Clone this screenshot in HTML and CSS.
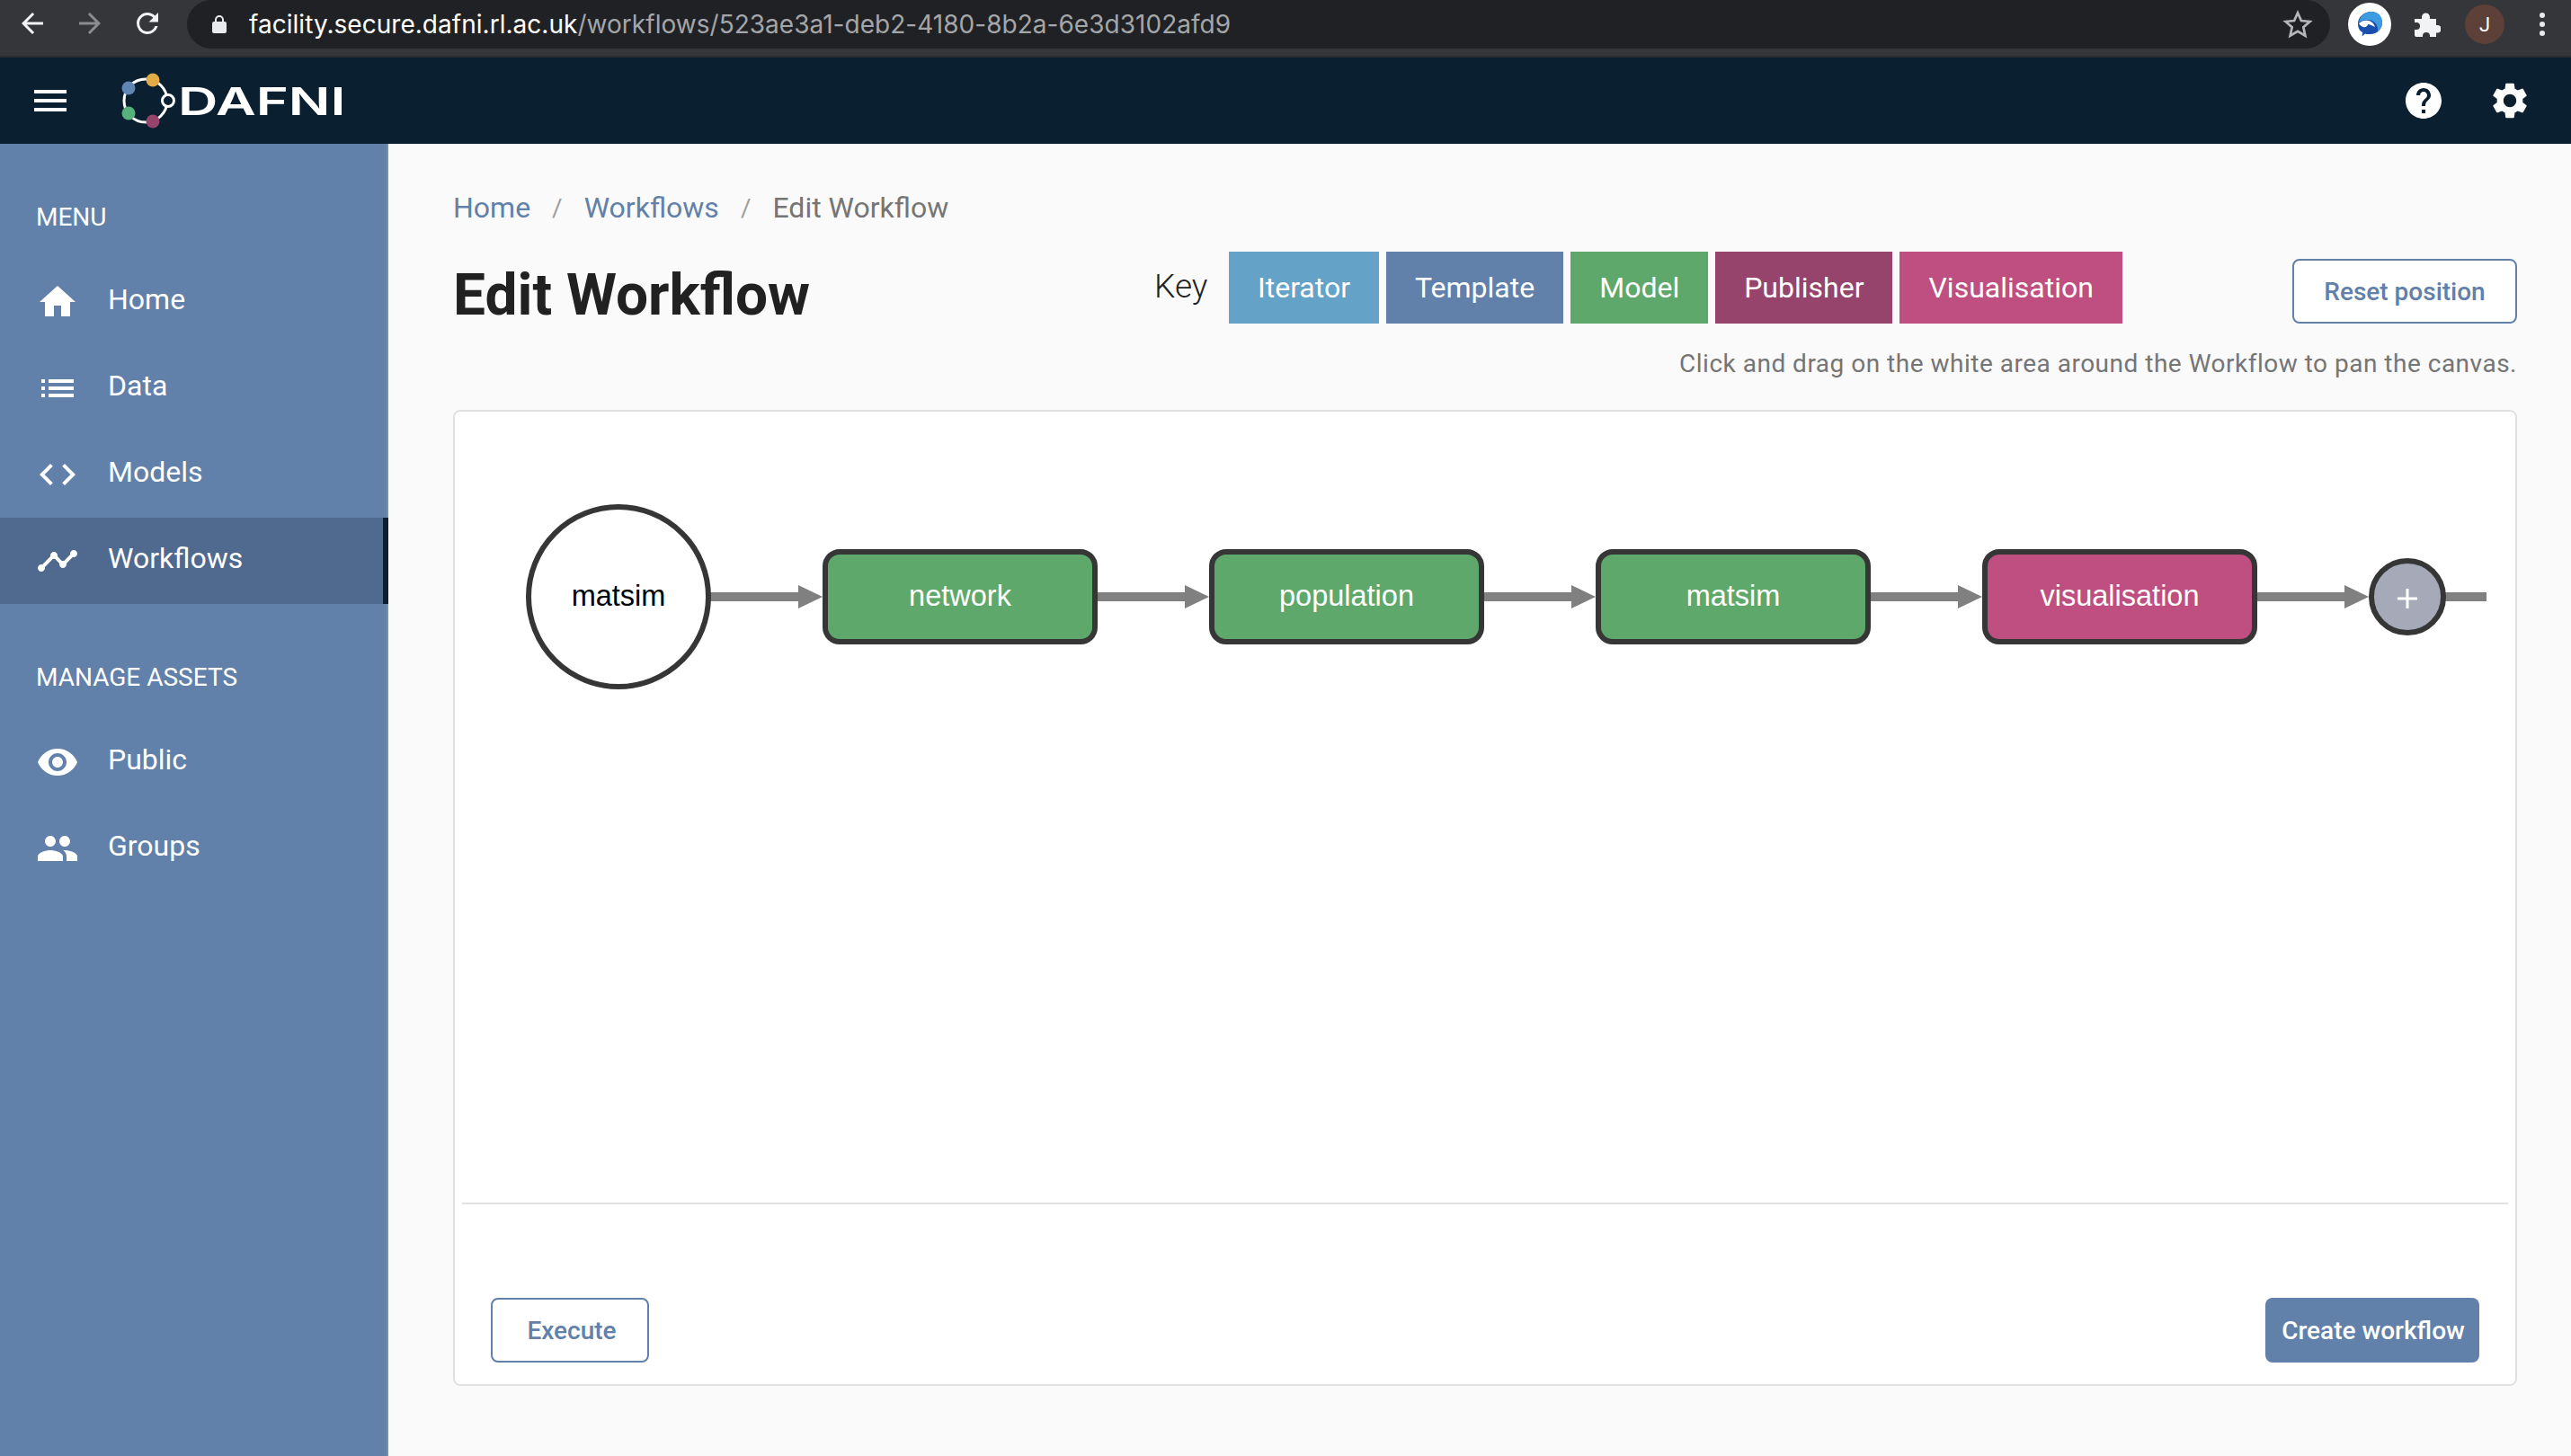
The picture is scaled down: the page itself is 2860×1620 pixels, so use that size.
FILE: index.html
```html
<!DOCTYPE html>
<html lang="en">
<head>
    <meta charset="UTF-8">
    <meta name="viewport" content="width=device-width, initial-scale=1.0">
    <title>Edit Workflow</title>
    <link rel="stylesheet" href="styles.css">
</head>
<body>

    <div class="browser-bar">
        <svg class="chrome-icon back" viewBox="0 0 24 24"><path d="M20 11H7.83l5.59-5.59L12 4l-8 8 8 8 1.41-1.41L7.83 13H20v-2z"/></svg>
        <svg class="chrome-icon forward" viewBox="0 0 24 24"><path d="M4 11h12.17l-5.59-5.59L12 4l8 8-8 8-1.41-1.41L16.17 13H4v-2z"/></svg>
        <svg class="chrome-icon reload" viewBox="0 0 24 24"><path d="M17.65 6.35A7.96 7.96 0 0 0 12 4a8 8 0 1 0 7.73 10h-2.08A6 6 0 1 1 12 6c1.66 0 3.14.69 4.22 1.78L13 11h7V4l-2.35 2.35z"/></svg>
        <div class="address">
            <svg class="lock" viewBox="0 0 16 20"><path d="M8 0a5 5 0 0 0-5 5v2H2a2 2 0 0 0-2 2v9a2 2 0 0 0 2 2h12a2 2 0 0 0 2-2V9a2 2 0 0 0-2-2h-1V5a5 5 0 0 0-5-5zm3 7H5V5a3 3 0 0 1 6 0v2z"/></svg>
            <span class="url"><span class="host">facility.secure.dafni.rl.ac.uk</span>/workflows/523ae3a1-deb2-4180-8b2a-6e3d3102afd9</span>
            <svg class="star" viewBox="0 0 24 24"><path d="M12 3.500l2.600 5.900 6.400.6-4.800 4.200 1.400 6.300-5.600-3.300-5.600 3.300 1.400-6.300L3 10l6.400-.6z"/></svg>
        </div>
        <div class="chrome-right">
            <svg class="ext-logo" viewBox="0 0 48 48">
                <circle cx="24" cy="24" r="24" fill="#fff"/>
                <path d="M26 10c7 0 12 5 12 12 0 8-7 14-15 13-2 0-3 0-4-.5l-3.500 3 .8-4.500C12 31 11 27 11 23c0-7 7-13 15-13z" fill="#1a4fae"/>
                <path d="M26 10c7 0 12 5 12 12 0 4-2 8-5 10 1-7-4-13-11-13-4 0-8 1-10 3 1-7 7-12 14-12z" fill="#3d9be0"/>
                <path d="M12 23c3-3 7-4 11-3 4 1 6 4 7 7-4-2-6-3-8-3 0 2-3 4-5 3-2-.5-4-2-5-4z" fill="#fff"/>
            </svg>
            <svg class="puzzle" viewBox="0 0 29 27"><path d="M0 7h8V5a4.500 4.500 0 0 1 9 0v2h7v7h1.500a4.300 4.300 0 0 1 0 8.600H24V27h-7v-1a4 4 0 0 0-8 0v1H2a2 2 0 0 1-2-2v-6h2a4 4 0 0 0 0-8H0V7z"/></svg>
            <span class="avatar">J</span>
            <span class="dots"><i></i><i></i><i></i></span>
        </div>
    </div>

    <header class="topnav">
        <svg class="icon menu-icon" viewBox="0 0 24 24"><path d="M3 18h18v-2H3v2zm0-5h18v-2H3v2zm0-7v2h18V6H3z"/></svg>
        <svg class="logo-mark" viewBox="0 0 60 60">
            <circle cx="30" cy="30" r="24" fill="none" stroke="#fff" stroke-width="3"/>
            <circle cx="38" cy="7" r="7.500" fill="#e2ab45"/>
            <circle cx="11" cy="16" r="7.500" fill="#5f85b3"/>
            <circle cx="11" cy="44" r="7.500" fill="#55b27a"/>
            <circle cx="38" cy="53" r="7.500" fill="#96446b"/>
            <circle cx="55" cy="30" r="6.500" fill="#0a1f30" stroke="#fff" stroke-width="3"/>
        </svg>
        <span class="logo-text">DAFNI</span>
        <div class="nav-actions">
            <svg class="icon" viewBox="0 0 24 24"><path d="M12 2C6.480 2 2 6.480 2 12s4.480 10 10 10 10-4.480 10-10S17.520 2 12 2zm1 17h-2v-2h2v2zm2.070-7.750l-.9.920C13.450 12.900 13 13.500 13 15h-2v-.5c0-1.100.450-2.100 1.170-2.830l1.240-1.260c.370-.360.590-.860.590-1.410 0-1.100-.9-2-2-2s-2 .9-2 2H8c0-2.210 1.790-4 4-4s4 1.790 4 4c0 .880-.360 1.680-.930 2.250z"/></svg>
            <svg class="icon" viewBox="0 0 24 24"><path d="M19.140 12.940c.040-.3.060-.610.060-.940 0-.320-.020-.640-.070-.940l2.030-1.580c.180-.140.230-.410.120-.610l-1.920-3.320c-.120-.220-.370-.290-.590-.220l-2.390.960c-.5-.380-1.030-.7-1.620-.940l-.360-2.540c-.040-.240-.240-.410-.480-.410h-3.840c-.240 0-.430.170-.470.410l-.360 2.540c-.590.240-1.130.570-1.620.940l-2.390-.960c-.220-.080-.470 0-.590.220L2.740 8.870c-.120.210-.080.470.120.610l2.030 1.580c-.050.3-.090.630-.09.940s.02.64.07.94l-2.030 1.580c-.18.14-.23.41-.12.61l1.920 3.32c.12.22.37.29.59.22l2.39-.96c.5.38 1.03.7 1.62.94l.36 2.54c.05.24.24.41.48.41h3.84c.24 0 .44-.17.47-.41l.36-2.54c.59-.24 1.13-.56 1.62-.94l2.39.96c.22.08.47 0 .59-.22l1.92-3.32c.12-.22.07-.47-.12-.61l-2.010-1.580zM12 15.600c-1.980 0-3.600-1.620-3.600-3.600s1.620-3.600 3.600-3.600 3.600 1.620 3.600 3.600-1.620 3.600-3.600 3.600z"/></svg>
        </div>
    </header>

    <div class="layout">
        <aside class="sidebar">
            <div class="side-title">MENU</div>
            <a class="side-item">
                <svg class="icon" viewBox="0 0 24 24"><path d="M10 20v-6h4v6h5v-8h3L12 3 2 12h3v8z"/></svg>
                <span>Home</span>
            </a>
            <a class="side-item">
                <svg class="icon" viewBox="0 0 24 24"><path d="M3 13h2v-2H3v2zm0 4h2v-2H3v2zm0-8h2V7H3v2zm4 4h14v-2H7v2zm0 4h14v-2H7v2zM7 7v2h14V7H7z"/></svg>
                <span>Data</span>
            </a>
            <a class="side-item">
                <svg class="icon" viewBox="0 0 24 24"><path d="M9.400 16.600L4.800 12l4.600-4.600L8 6l-6 6 6 6 1.400-1.400zm5.200 0l4.600-4.600-4.600-4.600L16 6l6 6-6 6-1.400-1.400z"/></svg>
                <span>Models</span>
            </a>
            <a class="side-item active">
                <svg class="icon" viewBox="0 0 24 24"><path d="M23 8c0 1.100-.9 2-2 2-.180 0-.350-.020-.510-.070l-3.560 3.550c.050.160.070.340.070.520 0 1.100-.9 2-2 2s-2-.9-2-2c0-.180.020-.360.070-.520l-2.550-2.550c-.160.050-.340.070-.520.070s-.360-.020-.520-.070l-4.550 4.560c.050.160.070.330.070.510 0 1.100-.9 2-2 2s-2-.9-2-2 .9-2 2-2c.180 0 .350.020.510.070l4.560-4.550C8.020 9.360 8 9.180 8 9c0-1.100.9-2 2-2s2 .9 2 2c0 .180-.020.360-.070.520l2.550 2.550c.160-.050.340-.070.520-.070s.360.020.520.070l3.550-3.560C19.020 8.350 19 8.180 19 8c0-1.100.9-2 2-2s2 .9 2 2z"/></svg>
                <span>Workflows</span>
            </a>
            <div class="side-title second">MANAGE ASSETS</div>
            <a class="side-item">
                <svg class="icon" viewBox="0 0 24 24"><path d="M12 4.500C7 4.500 2.730 7.610 1 12c1.730 4.390 6 7.500 11 7.500s9.270-3.110 11-7.500c-1.730-4.390-6-7.500-11-7.500zM12 17c-2.760 0-5-2.240-5-5s2.240-5 5-5 5 2.240 5 5-2.240 5-5 5zm0-8c-1.660 0-3 1.340-3 3s1.340 3 3 3 3-1.340 3-3-1.340-3-3-3z"/></svg>
                <span>Public</span>
            </a>
            <a class="side-item">
                <svg class="icon" viewBox="0 0 24 24"><path d="M16 11c1.660 0 2.990-1.340 2.990-3S17.660 5 16 5c-1.660 0-3 1.340-3 3s1.340 3 3 3zm-8 0c1.660 0 2.990-1.340 2.990-3S9.660 5 8 5C6.340 5 5 6.340 5 8s1.340 3 3 3zm0 2c-2.330 0-7 1.170-7 3.500V19h14v-2.500c0-2.330-4.670-3.500-7-3.500zm8 0c-.290 0-.620.020-.970.050 1.160.840 1.970 1.970 1.970 3.450V19h6v-2.500c0-2.330-4.670-3.500-7-3.500z"/></svg>
                <span>Groups</span>
            </a>
        </aside>

        <main class="content">
            <nav class="breadcrumb">
                <a>Home</a><span class="sep">/</span><a>Workflows</a><span class="sep">/</span><span class="current">Edit Workflow</span>
            </nav>

            <div class="page-head">
                <h1>Edit Workflow</h1>
                <div class="key-panel">
                    <div class="key-row">
                        <span class="key-label">Key</span>
                        <span class="chip iterator">Iterator</span>
                        <span class="chip template">Template</span>
                        <span class="chip model">Model</span>
                        <span class="chip publisher">Publisher</span>
                        <span class="chip visualisation">Visualisation</span>
                        <button class="btn btn-outline reset">Reset position</button>
                    </div>
                    <p class="hint">Click and drag on the white area around the Workflow to pan the canvas.</p>
                </div>
            </div>

            <section class="card">
                <svg class="canvas" viewBox="506 458 2292 880">
                    <!-- edges -->
                    <g class="edge">
                        <rect x="790" y="659" width="100" height="10"/><path d="M888 651l27 13-27 13z"/>
                        <rect x="1221" y="659" width="100" height="10"/><path d="M1318 651l27 13-27 13z"/>
                        <rect x="1651" y="659" width="100" height="10"/><path d="M1748 651l27 13-27 13z"/>
                        <rect x="2081" y="659" width="100" height="10"/><path d="M2178 651l27 13-27 13z"/>
                        <rect x="2510" y="659" width="100" height="10"/><path d="M2608 651l27 13-27 13z"/>
                        <rect x="2718" y="659" width="48" height="10"/>
                    </g>
                    <!-- nodes -->
                    <circle class="node node-start" cx="688" cy="664" r="100"/>
                    <text class="node-label dark" x="688" y="674">matsim</text>
                    <rect class="node node-model" x="918" y="614" width="300" height="100" rx="16"/>
                    <text class="node-label" x="1068" y="674">network</text>
                    <rect class="node node-model" x="1348" y="614" width="300" height="100" rx="16"/>
                    <text class="node-label" x="1498" y="674">population</text>
                    <rect class="node node-model" x="1778" y="614" width="300" height="100" rx="16"/>
                    <text class="node-label" x="1928" y="674">matsim</text>
                    <rect class="node node-vis" x="2208" y="614" width="300" height="100" rx="16"/>
                    <text class="node-label" x="2358" y="674">visualisation</text>
                    <circle class="node node-add" cx="2678" cy="664" r="40"/>
                    <path class="add-plus" d="M2667 666h22M2678 655v22"/>
                </svg>
                <div class="divider"></div>
                <div class="card-actions">
                    <button class="btn btn-outline execute">Execute</button>
                    <button class="btn btn-solid">Create workflow</button>
                </div>
            </section>
        </main>
    </div>

</body>
</html>
```

FILE: styles.css
```css
* {
    box-sizing: border-box;
}
html, body {
    height: 100%;
}
body {
    margin: 0;
    width: 2860px;
    height: 1620px;
    overflow: hidden;
    display: flex;
    flex-direction: column;
    font-family: Roboto, "Liberation Sans", sans-serif;
    background-color: #fafafa;
    color: #212121;
}
.icon {
    width: 48px;
    height: 48px;
    fill: #fff;
    flex: none;
}

/* browser toolbar */
.browser-bar {
    flex: none;
    height: 64px;
    display: flex;
    align-items: flex-start;
    background-color: #35363a;
    border-bottom: 2px solid #2a2b2e;
}
.chrome-icon {
    width: 36px;
    height: 36px;
    margin-top: 8px;
    flex: none;
    fill: #f1f3f4;
}
.back {
    margin-left: 18px;
}
.forward {
    margin-left: 28px;
    fill: #8b8c8e;
}
.reload {
    margin-left: 28px;
}
.address {
    margin-left: 26px;
    width: 2384px;
    height: 54px;
    border-radius: 27px;
    background-color: #202124;
    display: flex;
    align-items: center;
    padding: 0 18px 0 28px;
}
.lock {
    width: 16px;
    height: 20px;
    fill: #e8eaed;
    flex: none;
}
.url {
    margin-left: 25px;
    font-family: Inter, Roboto, sans-serif;
    font-size: 28px;
    letter-spacing: 0.03px;
    color: #a4a6a9;
    white-space: nowrap;
}
.host {
    color: #fff;
}
.star {
    margin-left: auto;
    width: 36px;
    height: 36px;
    fill: none;
    stroke: #b5b6b8;
    stroke-width: 1.8;
}
.chrome-right {
    display: flex;
    align-items: center;
    height: 54px;
    flex: 1;
}
.ext-logo {
    margin-left: 20px;
    width: 48px;
    height: 48px;
    flex: none;
}
.puzzle {
    margin-left: 26px;
    width: 29px;
    height: 27px;
    fill: #f1f3f4;
    flex: none;
}
.avatar {
    margin-left: 27px;
    width: 44px;
    height: 44px;
    border-radius: 50%;
    background-color: #5d4037;
    color: #fff;
    font-size: 22px;
    display: flex;
    align-items: center;
    justify-content: center;
}
.dots {
    margin-left: 39px;
    display: flex;
    flex-direction: column;
    gap: 4px;
}
.dots i {
    display: block;
    width: 6px;
    height: 6px;
    border-radius: 50%;
    background-color: #e8eaed;
}

/* app header */
.topnav {
    flex: none;
    height: 96px;
    display: flex;
    align-items: center;
    padding: 0 44px 0 32px;
    background-color: #0a1f30;
}
.logo-mark {
    margin-left: 52px;
    width: 60px;
    height: 60px;
    flex: none;
    overflow: visible;
}
.logo-text {
    margin-left: 6px;
    font-family: Inter, sans-serif;
    font-weight: 600;
    font-size: 43px;
    color: #fff;
    line-height: 1;
    transform: scaleX(1.43);
    transform-origin: left center;
}
.nav-actions {
    margin-left: auto;
    display: flex;
    gap: 48px;
}

.layout {
    flex: 1;
    display: flex;
    min-height: 0;
}

/* sidebar */
.sidebar {
    flex: none;
    width: 432px;
    background-color: #6180aa;
    border-right: 2px solid #7490b5;
    color: #fff;
    padding-top: 62px;
}
.side-title {
    padding-left: 40px;
    font-size: 28px;
    line-height: 40px;
    height: 66px;
}
.side-title.second {
    margin-top: 62px;
    height: 66px;
}
.side-item {
    height: 96px;
    display: flex;
    align-items: center;
    gap: 32px;
    padding-left: 40px;
    font-size: 32px;
    margin-right: -2px;
}
.side-item span {
    position: relative;
    top: -3px;
}
.side-item.active {
    background-color: #4f698f;
    border-right: 6px solid #0a1f30;
}

/* page */
.content {
    flex: 1;
    min-width: 0;
    padding: 47px 60px 0 72px;
}
.breadcrumb {
    display: flex;
    align-items: center;
    height: 48px;
    font-size: 32px;
}
.breadcrumb a {
    color: #6180aa;
}
.breadcrumb .sep {
    margin: 0 24px;
    color: #9e9e9e;
    font-size: 28px;
}
.breadcrumb .current {
    color: #757575;
}
.page-head {
    margin-top: 25px;
    display: flex;
    justify-content: space-between;
    height: 176px;
}
h1 {
    margin: 10px 0 0;
    font-size: 64px;
    font-weight: 700;
    line-height: 78px;
    color: #212121;
}
.key-panel {
    width: 1516px;
}
.key-row {
    display: flex;
    align-items: flex-start;
    gap: 8px;
}
.key-label {
    font-size: 37px;
    font-weight: 300;
    line-height: 78px;
    width: 75px;
    flex: none;
    color: #212121;
}
.chip {
    height: 80px;
    padding: 0 32px;
    display: flex;
    align-items: center;
    font-size: 32px;
    color: #fff;
}
.iterator { background-color: #64a2c8; }
.template { background-color: #6180aa; }
.model { background-color: #5fa86b; }
.publisher { background-color: #96446b; }
.visualisation { background-color: #be4f80; }
.btn {
    height: 72px;
    border-radius: 8px;
    font-family: inherit;
    font-size: 28px;
    font-weight: 500;
}
.btn-outline {
    background-color: #fff;
    border: 2px solid #6180aa;
    color: #6180aa;
}
.btn-solid {
    background-color: #6180aa;
    border: none;
    color: #fff;
    width: 238px;
    padding: 0 0 0 2px;
}
.reset {
    margin: 8px 0 0 auto;
    width: 250px;
}
.hint {
    margin: 25px 0 0;
    text-align: right;
    font-size: 28px;
    line-height: 40px;
    letter-spacing: 0.5px;
    color: #757575;
}

/* workflow card */
.card {
    height: 1086px;
    background-color: #fff;
    border: 2px solid #e0e0e0;
    border-radius: 8px;
}
.canvas {
    display: block;
    width: 100%;
    height: 880px;
}
.edge {
    fill: #808080;
}
.node {
    stroke: #363636;
    stroke-width: 6;
}
.node-start { fill: #fff; }
.node-model { fill: #5fa86b; }
.node-vis { fill: #be4f80; }
.node-add { fill: #a6aab8; }
.add-plus {
    stroke: #fff;
    stroke-width: 3;
    fill: none;
}
.node-label {
    font-family: "Liberation Sans", sans-serif;
    font-size: 32.5px;
    text-anchor: middle;
    fill: #fff;
}
.node-label.dark {
    fill: #000;
}
.divider {
    height: 2px;
    margin: 0 8px;
    background-color: #e0e0e0;
}
.card-actions {
    display: flex;
    justify-content: space-between;
    padding: 104px 40px 0;
}
.execute {
    width: 176px;
    padding: 0 0 0 4px;
}
```
